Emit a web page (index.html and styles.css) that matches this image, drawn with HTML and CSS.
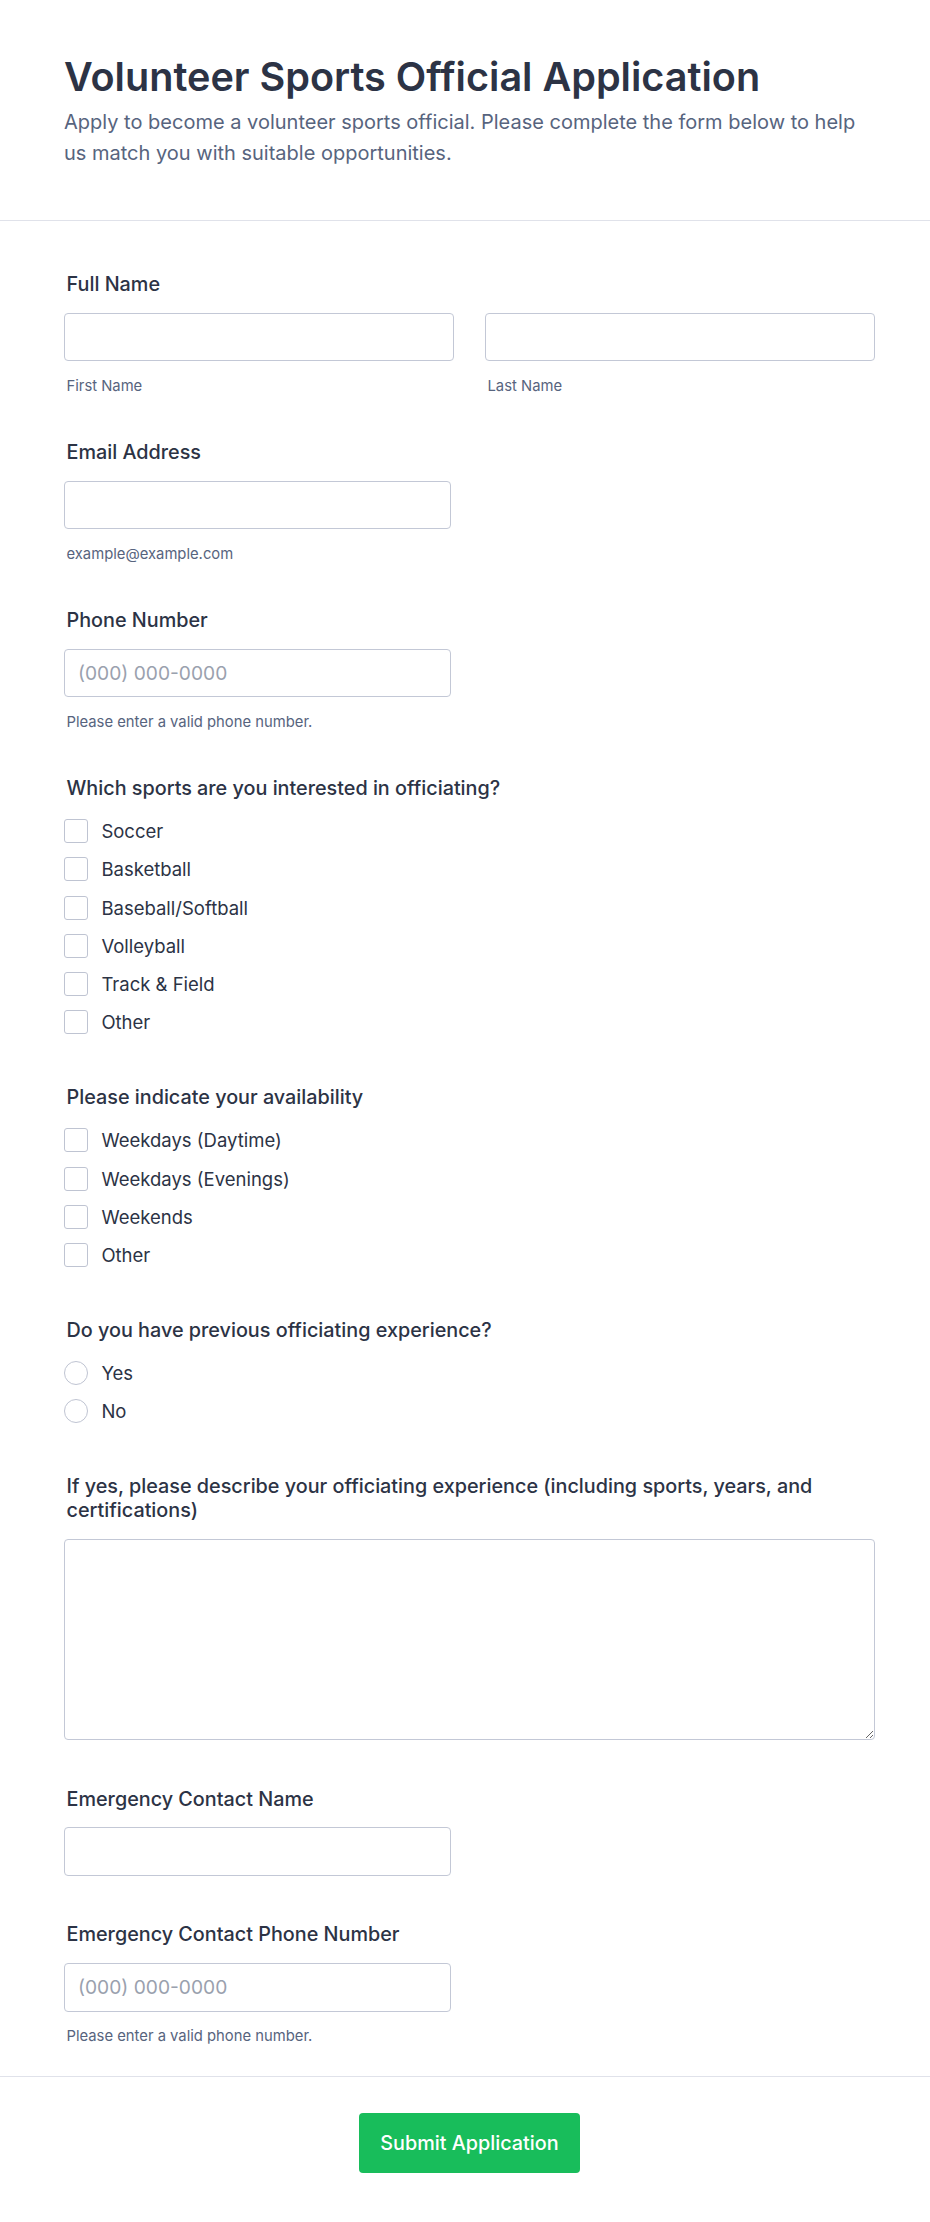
FILE: index.html
```html
<!DOCTYPE html>
<html lang="en">
<head>
<meta charset="utf-8">
<title>Volunteer Sports Official Application</title>
<link rel="stylesheet" href="styles.css">
</head>
<body>
<div class="page">
  <header class="header">
    <h1 class="title">Volunteer Sports Official Application</h1>
    <p class="subtitle">Apply to become a volunteer sports official. Please complete the form below to help us match you with suitable opportunities.</p>
  </header>

  <form class="form">
    <div class="field field-sub">
      <div class="label">Full Name</div>
      <div class="name-row">
        <div class="name-col">
          <input class="input" type="text">
          <div class="sublabel">First Name</div>
        </div>
        <div class="name-col">
          <input class="input" type="text">
          <div class="sublabel">Last Name</div>
        </div>
      </div>
    </div>

    <div class="field field-sub">
      <div class="label">Email Address</div>
      <input class="input input-half" type="email">
      <div class="sublabel">example@example.com</div>
    </div>

    <div class="field field-sub">
      <div class="label">Phone Number</div>
      <input class="input input-half" type="tel" placeholder="(000) 000-0000">
      <div class="sublabel">Please enter a valid phone number.</div>
    </div>

    <div class="field field-options">
      <div class="label">Which sports are you interested in officiating?</div>
      <div class="options">
        <label class="option"><input class="check" type="checkbox"><span>Soccer</span></label>
        <label class="option"><input class="check" type="checkbox"><span>Basketball</span></label>
        <label class="option"><input class="check" type="checkbox"><span>Baseball/Softball</span></label>
        <label class="option"><input class="check" type="checkbox"><span>Volleyball</span></label>
        <label class="option"><input class="check" type="checkbox"><span>Track &amp; Field</span></label>
        <label class="option"><input class="check" type="checkbox"><span>Other</span></label>
      </div>
    </div>

    <div class="field field-options">
      <div class="label">Please indicate your availability</div>
      <div class="options">
        <label class="option"><input class="check" type="checkbox"><span>Weekdays (Daytime)</span></label>
        <label class="option"><input class="check" type="checkbox"><span>Weekdays (Evenings)</span></label>
        <label class="option"><input class="check" type="checkbox"><span>Weekends</span></label>
        <label class="option"><input class="check" type="checkbox"><span>Other</span></label>
      </div>
    </div>

    <div class="field field-options">
      <div class="label">Do you have previous officiating experience?</div>
      <div class="options">
        <label class="option"><input class="radio" type="radio" name="exp"><span>Yes</span></label>
        <label class="option"><input class="radio" type="radio" name="exp"><span>No</span></label>
      </div>
    </div>

    <div class="field field-plain">
      <div class="label">If yes, please describe your officiating experience (including sports, years, and certifications)</div>
      <textarea class="textarea"></textarea>
    </div>

    <div class="field field-plain">
      <div class="label">Emergency Contact Name</div>
      <input class="input input-half" type="text">
    </div>

    <div class="field field-last">
      <div class="label">Emergency Contact Phone Number</div>
      <input class="input input-half" type="tel" placeholder="(000) 000-0000">
      <div class="sublabel">Please enter a valid phone number.</div>
    </div>
  </form>

  <footer class="footer">
    <button class="submit" type="button">Submit Application</button>
  </footer>
</div>
</body>
</html>
```

FILE: styles.css
```css
* {
  box-sizing: border-box;
}

html, body {
  margin: 0;
  padding: 0;
  background: #ffffff;
}

body {
  font-family: Inter, "Noto Sans", "Liberation Sans", sans-serif;
  color: #2c3345;
}

.page {
  width: 930px;
}

.header {
  padding: 52.8px 55px 50.4px 64px;
  border-bottom: 1px solid #e0e2ea;
}

.title {
  margin: 0;
  font-size: 39.6px;
  line-height: 48.6px;
  font-weight: 600;
  color: #2c3345;
}

.subtitle {
  margin: 5.3px 0 0;
  font-size: 20px;
  line-height: 31.3px;
  font-weight: 400;
  color: #57647e;
}

.form {
  padding: 51.5px 55px 29.7px 64px;
}

.field-sub {
  margin-bottom: 43.8px;
}

.field-options {
  margin-bottom: 50.5px;
}

.field-plain {
  margin-bottom: 46.8px;
}

.field-last {
  margin-bottom: 0;
}

.label {
  padding-left: 2.5px;
  font-size: 19.8px;
  line-height: 24px;
  font-weight: 500;
  color: #2c3345;
  margin-bottom: 16.8px;
}

.field-options .label {
  margin-bottom: 19.5px;
}

.name-row {
  display: grid;
  grid-template-columns: 1fr 1fr;
  column-gap: 31px;
}

.input {
  display: block;
  width: 100%;
  height: 48.4px;
  margin: 0;
  padding: 0 13px;
  border: 1px solid #c3c8d6;
  border-radius: 4px;
  background: #ffffff;
  font-family: Inter, "Noto Sans", "Liberation Sans", sans-serif;
  font-size: 19.2px;
  color: #2c3345;
  outline: none;
}

.input-half {
  width: 387px;
}

.input::placeholder {
  color: #9aa1ae;
  opacity: 1;
}

.sublabel {
  margin-top: 14.8px;
  padding-left: 2.5px;
  font-size: 14.8px;
  line-height: 20px;
  color: #57647e;
}

.options {
  display: flex;
  flex-direction: column;
  gap: 14.27px;
}

.option {
  display: flex;
  align-items: center;
  gap: 13.4px;
  height: 24px;
  font-size: 18.5px;
  line-height: 24px;
  color: #2c3345;
}

.check,
.radio {
  appearance: none;
  -webkit-appearance: none;
  flex: 0 0 auto;
  width: 24px;
  height: 24px;
  margin: 0;
  border: 1px solid #bfc4d2;
  background: #ffffff;
}

.check {
  border-radius: 3px;
}

.radio {
  border-radius: 50%;
}

.textarea {
  display: block;
  width: 100%;
  height: 201px;
  margin: 0;
  padding: 12px 13px;
  border: 1px solid #c3c8d6;
  border-radius: 4px;
  background: #ffffff;
  font-family: Inter, "Noto Sans", "Liberation Sans", sans-serif;
  font-size: 19.2px;
  resize: vertical;
  outline: none;
}

.footer {
  border-top: 1px solid #e0e2ea;
  padding: 36.3px 55px 49px 64px;
  display: flex;
  justify-content: center;
}

.submit {
  height: 59.4px;
  padding: 0 21.5px;
  border: none;
  border-radius: 4px;
  background: #18bd5b;
  color: #ffffff;
  font-family: Inter, "Noto Sans", "Liberation Sans", sans-serif;
  font-size: 19.8px;
  font-weight: 500;
  cursor: pointer;
}
```
